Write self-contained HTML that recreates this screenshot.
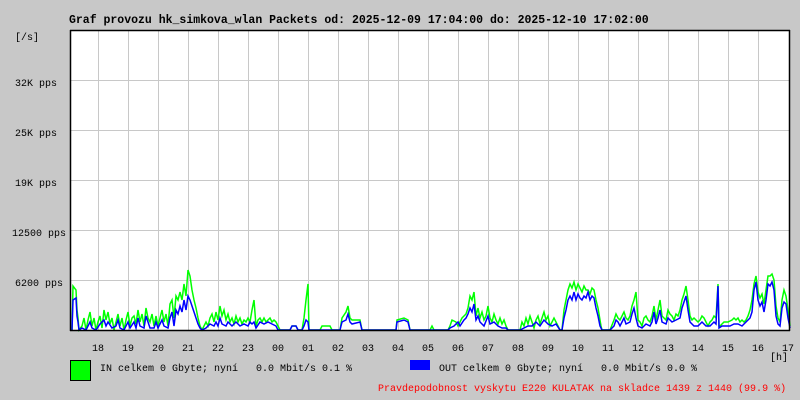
<!DOCTYPE html>
<html><head><meta charset="utf-8"><style>
body{margin:0;background:#c8c8c8;width:800px;height:400px;overflow:hidden;font-family:"Liberation Mono",monospace}
svg{position:absolute;left:0;top:0}
text{white-space:pre}
</style></head><body>
<svg width="800" height="400" xmlns="http://www.w3.org/2000/svg" font-family="Liberation Mono, monospace">
<rect x="70" y="30" width="720" height="300" fill="#fff"/>
<g stroke="#c8c8c8" stroke-width="1">
<path d="M98.5 30V330M128.5 30V330M158.5 30V330M188.5 30V330M218.5 30V330M248.5 30V330M278.5 30V330M308.5 30V330M338.5 30V330M368.5 30V330M398.5 30V330M428.5 30V330M458.5 30V330M488.5 30V330M518.5 30V330M548.5 30V330M578.5 30V330M608.5 30V330M638.5 30V330M668.5 30V330M698.5 30V330M728.5 30V330M758.5 30V330"/>
<path d="M70 80.5H790M70 130.5H790M70 180.5H790M70 230.5H790M70 280.5H790"/>
</g>
<polyline fill="none" stroke="#00ff00" stroke-width="1.5" points="72,330 73,286 76,290 77,310 78,318 79,330 82,326 84,318 86,330 88,320 90,312 92,326 94,318 96,330 98,322 100,316 102,328 104,310 106,320 108,312 110,324 112,318 114,330 116,322 118,314 120,326 122,318 124,330 126,320 128,312 130,326 132,318 134,316 136,324 138,310 140,322 142,314 144,326 146,308 148,318 150,322 152,314 154,326 156,316 158,326 160,318 162,310 164,322 166,314 168,326 170,304 172,300 174,318 176,296 178,300 180,292 182,300 184,284 186,296 188,270 190,276 192,290 194,300 196,308 198,318 200,326 202,330 204,326 206,322 208,326 210,318 212,314 214,322 216,312 218,320 220,306 222,316 224,310 226,320 228,314 230,322 232,318 234,324 236,316 238,322 240,318 242,324 244,320 246,322 248,318 250,322 252,310 254,300 256,326 258,320 260,318 262,322 264,318 266,322 268,320 270,318 272,322 274,320 276,322 278,326 280,330 290,330 292,326 296,326 298,330 302,330 304,318 306,300 308,284 309,330 320,330 322,326 330,326 332,330 340,330 342,318 346,312 348,306 350,318 352,320 356,320 360,320 362,330 380,330 396,330 397,320 404,318 408,320 410,330 430,330 432,326 434,330 448,330 450,326 452,320 456,322 458,326 460,322 462,318 464,316 466,314 468,308 470,296 472,300 474,292 476,316 478,308 480,318 482,312 484,320 486,316 488,306 490,318 492,322 494,314 496,320 498,324 500,318 502,324 504,320 506,326 508,330 520,330 522,322 524,326 526,318 528,324 530,316 532,322 534,328 536,320 538,316 540,324 542,318 544,312 546,320 548,316 550,326 552,322 554,318 556,322 558,326 560,330 562,330 564,310 566,300 568,290 570,284 572,288 574,282 576,290 578,284 580,288 582,292 584,286 586,290 588,290 590,294 592,288 594,290 596,300 598,308 600,320 601,326 602,330 610,330 614,320 616,314 618,318 620,320 622,316 624,312 626,318 628,320 630,316 632,306 634,300 636,292 638,320 640,322 642,326 644,318 646,316 648,320 650,322 652,316 654,306 656,320 658,310 660,300 662,316 664,318 666,320 668,310 670,314 672,316 674,320 676,314 678,316 680,310 682,300 684,294 686,286 688,300 690,316 692,320 694,318 696,320 698,322 700,320 702,316 704,318 706,322 708,326 710,322 712,320 714,316 716,318 718,284 719,326 720,326 722,324 724,322 728,322 732,320 734,318 736,320 738,318 740,322 742,320 744,322 746,320 748,316 750,310 752,300 754,284 756,276 758,292 760,298 762,294 764,304 766,290 768,276 770,276 772,274 774,280 776,306 778,318 780,322 782,300 784,290 786,296 788,310 790,326"/>
<polyline fill="none" stroke="#0000ff" stroke-width="1.5" points="72,330 73,300 76,298 77,316 78,322 79,330 82,328 86,330 88,326 90,322 92,328 96,330 100,324 104,320 106,326 108,322 112,328 116,326 118,320 120,328 124,330 128,322 130,328 134,322 136,328 138,318 140,326 144,328 146,316 148,322 150,328 154,328 156,322 158,328 162,320 164,326 168,328 170,318 172,312 174,326 176,310 178,314 180,306 182,312 184,300 186,310 188,296 190,300 192,306 194,312 196,318 198,324 200,328 202,330 206,328 210,324 214,326 216,322 218,326 220,318 222,324 226,326 228,322 232,326 236,322 240,326 244,324 248,326 250,322 252,324 254,322 256,328 260,322 264,324 268,322 272,324 276,326 278,330 290,330 292,326 296,326 298,330 302,330 304,326 306,320 308,322 309,330 340,330 342,322 346,320 348,314 350,322 352,324 360,322 362,330 396,330 397,322 404,320 408,322 410,330 448,330 450,328 454,326 458,322 460,326 464,320 466,318 468,314 470,308 472,312 474,304 476,320 478,316 480,322 484,326 488,316 490,324 494,322 498,326 502,328 506,328 508,330 520,330 524,328 528,326 532,326 536,322 540,326 544,320 548,324 552,326 556,324 560,330 562,330 564,318 566,310 568,300 570,296 572,300 574,292 576,300 578,294 580,298 582,300 584,296 586,298 588,292 590,300 592,296 594,298 596,308 598,316 600,326 602,330 610,330 614,326 616,320 618,322 620,326 622,322 624,318 626,324 630,322 632,314 634,308 636,318 638,326 642,328 646,324 650,326 652,322 654,312 656,324 658,318 660,310 662,322 666,324 668,318 672,322 676,320 680,318 682,308 684,302 686,296 688,310 690,322 694,326 698,326 702,322 706,326 710,326 714,322 716,324 718,286 719,328 722,326 730,326 734,324 738,324 742,326 746,322 748,320 750,318 752,312 754,290 756,282 758,300 760,306 762,302 764,312 766,300 768,284 770,286 772,282 774,290 776,316 778,324 780,326 782,308 784,302 786,304 788,318 790,328"/>
<path d="M70.5 30V331M70 30.5H790M789.5 30V331M70 330.5H790" stroke="#000" stroke-width="1.5" fill="none"/>
<text x="69" y="23" font-size="11.5" font-weight="bold">Graf provozu hk_simkova_wlan Packets od: 2025-12-09 17:04:00 do: 2025-12-10 17:02:00</text>
<g font-size="10" fill="#000">
<text x="15" y="40">[/s]</text>
<text x="15" y="86">32K pps</text>
<text x="15" y="136">25K pps</text>
<text x="15" y="186">19K pps</text>
<text x="12" y="236">12500 pps</text>
<text x="15" y="286">6200 pps</text>
<g text-anchor="middle">
<text x="98" y="351">18</text><text x="128" y="351">19</text><text x="158" y="351">20</text><text x="188" y="351">21</text><text x="218" y="351">22</text><text x="248" y="351">23</text><text x="278" y="351">00</text><text x="308" y="351">01</text><text x="338" y="351">02</text><text x="368" y="351">03</text><text x="398" y="351">04</text><text x="428" y="351">05</text><text x="458" y="351">06</text><text x="488" y="351">07</text><text x="518" y="351">08</text><text x="548" y="351">09</text><text x="578" y="351">10</text><text x="608" y="351">11</text><text x="638" y="351">12</text><text x="668" y="351">13</text><text x="698" y="351">14</text><text x="728" y="351">15</text><text x="758" y="351">16</text><text x="788" y="351">17</text>
</g>
<text x="770" y="360">[h]</text>
<text x="100" y="371">IN celkem 0 Gbyte; nyní   0.0 Mbit/s 0.1 %</text>
<text x="439" y="371">OUT celkem 0 Gbyte; nyní   0.0 Mbit/s 0.0 %</text>
<text x="378" y="391" fill="#ff0000">Pravdepodobnost vyskytu E220 KULATAK na skladce 1439 z 1440 (99.9 %)</text>
</g>
<rect x="70.5" y="360.5" width="20" height="20" fill="#00ff00" stroke="#000"/>
<rect x="410" y="360" width="20" height="10" fill="#0000ff"/>
</svg>
</body></html>
